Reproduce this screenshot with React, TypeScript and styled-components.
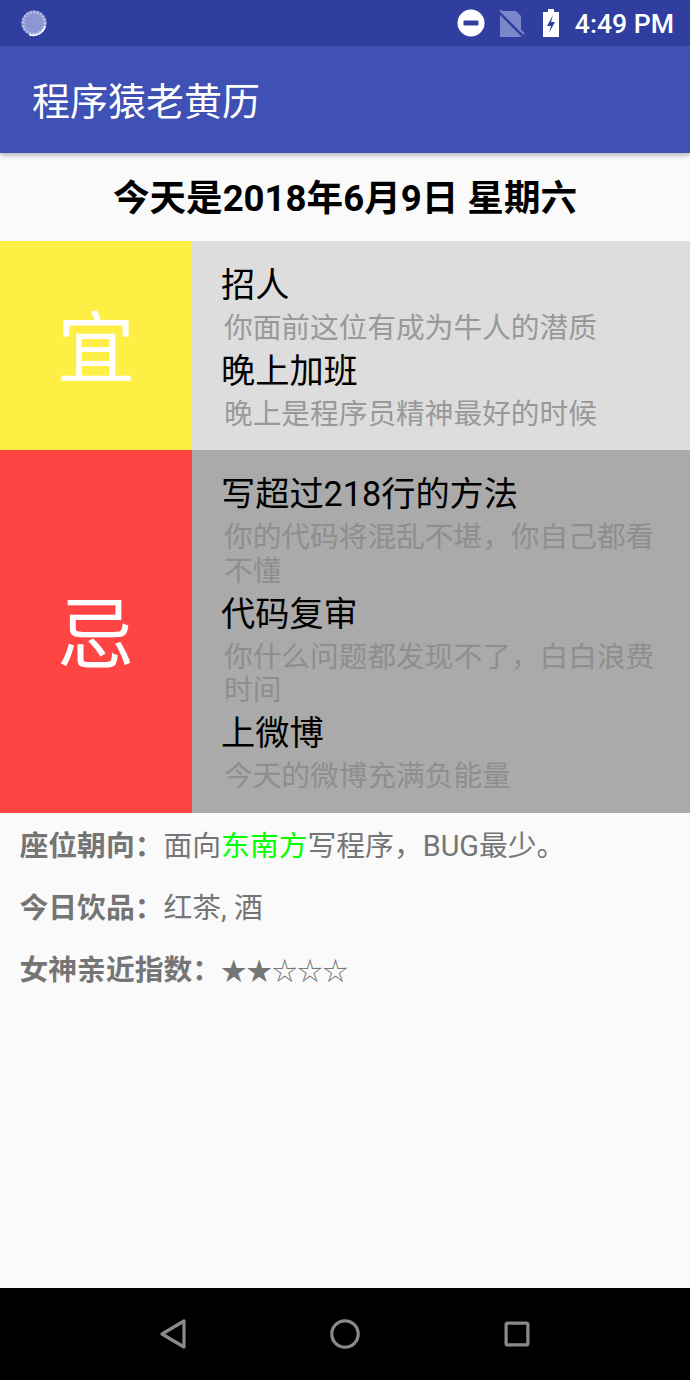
import styled, { createGlobalStyle } from 'styled-components'

const cjk = `Roboto, "Noto Sans CJK SC", sans-serif`

const GlobalStyle = createGlobalStyle`
  html, body {
    margin: 0;
    padding: 0;
    background: #fafafa;
  }
  * {
    box-sizing: border-box;
  }
`

const good = [
  { title: '招人', desc: '你面前这位有成为牛人的潜质' },
  { title: '晚上加班', desc: '晚上是程序员精神最好的时候' },
]

const bad = [
  { title: '写超过218行的方法', desc: '你的代码将混乱不堪，你自己都看不懂' },
  { title: '代码复审', desc: '你什么问题都发现不了，白白浪费时间' },
  { title: '上微博', desc: '今天的微博充满负能量' },
]

const App = () => {
  return (
    <Screen>
      <GlobalStyle />
      <StatusBar>
        <svg width="28" height="28" viewBox="0 0 28 28">
          <circle cx="14" cy="14" r="12.5" fill="#8d97d4" />
          <circle cx="14" cy="14" r="11" fill="none" stroke="#c3c9ec" strokeWidth="3" strokeDasharray="1.4 2" />
          <path d="M25 17a12 12 0 0 1-16 8.5" fill="none" stroke="#fff" strokeWidth="1.6" />
        </svg>
        <StatusRight>
          <svg width="28" height="28" viewBox="0 0 28 28">
            <circle cx="14" cy="14" r="13.5" fill="#fff" />
            <rect x="6.5" y="11.5" width="15" height="5" rx="1" fill="#303f9f" />
          </svg>
          <SimIcon width="26" height="28" viewBox="0 0 26 28">
            <path d="M1 2h16l5 5v21H1z" fill="#7c87cb" />
            <path d="M0 3l24 24" stroke="#303f9f" strokeWidth="3" />
            <path d="M1 1l24 24" stroke="#7c87cb" strokeWidth="2" />
          </SimIcon>
          <svg width="18" height="28" viewBox="0 0 18 28">
            <path d="M6 0h6v3h5v25H1V3h5z" fill="#fff" />
            <path d="M11 6l-6 11h4l-2 7 6-11H9z" fill="#303f9f" />
          </svg>
          <Clock>4:49 PM</Clock>
        </StatusRight>
      </StatusBar>
      <AppBar>程序猿老黄历</AppBar>
      <DateRow>今天是2018年6月9日 星期六</DateRow>
      <Section $bg="#dddddd" $height={209}>
        <Badge $bg="#ffee44">宜</Badge>
        <Items>
          {good.map(item => (
            <Item key={item.title}>
              <ItemTitle>{item.title}</ItemTitle>
              <ItemDesc $color="#999999">{item.desc}</ItemDesc>
            </Item>
          ))}
        </Items>
      </Section>
      <Section $bg="#aaaaaa" $height={363}>
        <Badge $bg="#ff4444">忌</Badge>
        <Items>
          {bad.map(item => (
            <Item key={item.title}>
              <ItemTitle>{item.title}</ItemTitle>
              <ItemDesc $color="#8e8e8e">{item.desc}</ItemDesc>
            </Item>
          ))}
        </Items>
      </Section>
      <Details>
        <DetailRow>
          <Label>座位朝向：</Label>面向<Green>东南方</Green>写程序，BUG最少。
        </DetailRow>
        <DetailRow>
          <Label>今日饮品：</Label>红茶, 酒
        </DetailRow>
        <DetailRow>
          <Label>女神亲近指数：</Label><Stars>★★☆☆☆</Stars>
        </DetailRow>
      </Details>
      <NavBar>
        <svg width="32" height="32" viewBox="0 0 32 32">
          <path d="M27 3v26L5 16z" fill="none" stroke="#8a8a8a" strokeWidth="3.2" strokeLinejoin="round" />
        </svg>
        <svg width="32" height="32" viewBox="0 0 32 32">
          <circle cx="16" cy="16" r="13.2" fill="none" stroke="#8a8a8a" strokeWidth="3.2" />
        </svg>
        <svg width="32" height="32" viewBox="0 0 32 32">
          <rect x="5.1" y="5.1" width="21.8" height="21.8" rx="1.5" fill="none" stroke="#8a8a8a" strokeWidth="3.2" />
        </svg>
      </NavBar>
    </Screen>
  )
}

const Screen = styled.div`
  width: 690px;
  height: 1380px;
  display: flex;
  flex-direction: column;
  background: #fafafa;
  font-family: ${cjk};
  overflow: hidden;
`

const StatusBar = styled.div`
  height: 46px;
  flex-shrink: 0;
  background: #303f9f;
  display: flex;
  align-items: center;
  justify-content: space-between;
  padding: 0 16px 0 20px;
`

const StatusRight = styled.div`
  display: flex;
  align-items: center;
  gap: 15px;
`

const SimIcon = styled.svg`
  margin: 0 2px 0 -1px;
`

const Clock = styled.span`
  font-size: 26.6px;
  color: #ffffff;
  font-weight: 500;
`

const AppBar = styled.div`
  height: 107px;
  flex-shrink: 0;
  background: #3f51b5;
  color: #ffffff;
  font-size: 38px;
  display: flex;
  align-items: center;
  padding: 0 0 3px 32px;
  box-shadow: 0 2px 5px rgba(0, 0, 0, 0.3);
  position: relative;
`

const DateRow = styled.div`
  height: 88px;
  flex-shrink: 0;
  display: flex;
  align-items: center;
  justify-content: center;
  padding-bottom: 4px;
  font-size: 36.6px;
  font-weight: 700;
  color: #000000;
`

const Section = styled.div<{ $bg: string; $height: number }>`
  height: ${p => p.$height}px;
  flex-shrink: 0;
  display: flex;
  background: ${p => p.$bg};
`

const Badge = styled.div<{ $bg: string }>`
  width: 192px;
  flex-shrink: 0;
  background: ${p => p.$bg};
  color: #ffffff;
  font-size: 78px;
  padding-bottom: 6px;
  display: flex;
  align-items: center;
  justify-content: center;
`

const Items = styled.div`
  flex: 1;
  display: flex;
  flex-direction: column;
  justify-content: center;
  padding: 4px 29px 0;
`

const Item = styled.div`
  display: flex;
  flex-direction: column;
`

const ItemTitle = styled.div`
  font-size: 34.2px;
  line-height: 46px;
  color: #000000;
`

const ItemDesc = styled.div<{ $color: string }>`
  font-size: 28.7px;
  line-height: 33.5px;
  padding-left: 3px;
  margin-top: 4px;
  margin-bottom: 2.5px;
  color: ${p => p.$color};
`

const Details = styled.div`
  flex: 1;
  padding: 14px 19.5px 0;
  display: flex;
  flex-direction: column;
  gap: 24px;
`

const DetailRow = styled.div`
  font-size: 28.8px;
  line-height: 38px;
  color: #757575;
`

const Label = styled.span`
  font-weight: 700;
`

const Green = styled.span`
  color: #00ff00;
`

const Stars = styled.span`
  font-size: 25.4px;
`

const NavBar = styled.div`
  height: 92px;
  flex-shrink: 0;
  background: #000000;
  display: flex;
  align-items: center;
  justify-content: space-between;
  padding: 0 157px;
`

export default App
